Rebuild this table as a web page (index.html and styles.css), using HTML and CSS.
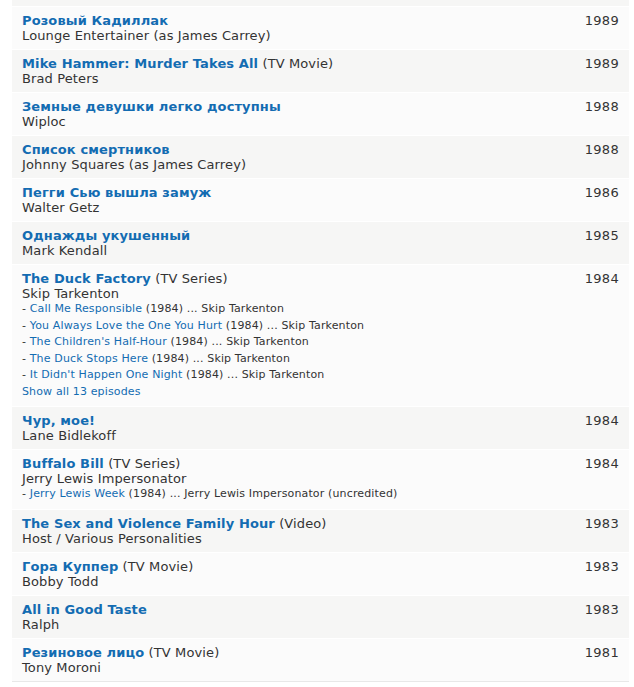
FILE: index.html
```html
<!DOCTYPE html>
<html lang="ru">
<head>
<meta charset="utf-8">
<title>Filmography</title>
<link rel="stylesheet" href="styles.css">
</head>
<body>
<div class="filmo">
  <div class="row odd tail"></div>
  <div class="row even">
    <span class="year">1989</span>
    <b><a href="#">Розовый Кадиллак</a></b><br>Lounge Entertainer (as James Carrey)
  </div>
  <div class="row odd">
    <span class="year">1989</span>
    <b><a href="#">Mike Hammer: Murder Takes All</a></b> (TV Movie)<br>Brad Peters
  </div>
  <div class="row even">
    <span class="year">1988</span>
    <b><a href="#">Земные девушки легко доступны</a></b><br>Wiploc
  </div>
  <div class="row odd">
    <span class="year">1988</span>
    <b><a href="#">Список смертников</a></b><br>Johnny Squares (as James Carrey)
  </div>
  <div class="row even">
    <span class="year">1986</span>
    <b><a href="#">Пегги Сью вышла замуж</a></b><br>Walter Getz
  </div>
  <div class="row odd">
    <span class="year">1985</span>
    <b><a href="#">Однажды укушенный</a></b><br>Mark Kendall
  </div>
  <div class="row even">
    <span class="year">1984</span>
    <b><a href="#">The Duck Factory</a></b> (TV Series)<br>Skip Tarkenton
    <div class="episodes">
      <div class="ep">- <a href="#">Call Me Responsible</a> (1984) ... Skip Tarkenton</div>
      <div class="ep">- <a href="#">You Always Love the One You Hurt</a> (1984) ... Skip Tarkenton</div>
      <div class="ep">- <a href="#">The Children's Half-Hour</a> (1984) ... Skip Tarkenton</div>
      <div class="ep">- <a href="#">The Duck Stops Here</a> (1984) ... Skip Tarkenton</div>
      <div class="ep">- <a href="#">It Didn't Happen One Night</a> (1984) ... Skip Tarkenton</div>
      <div class="ep"><a href="#">Show all 13 episodes</a></div>
    </div>
  </div>
  <div class="row odd">
    <span class="year">1984</span>
    <b><a href="#">Чур, мое!</a></b><br>Lane Bidlekoff
  </div>
  <div class="row even">
    <span class="year">1984</span>
    <b><a href="#">Buffalo Bill</a></b> (TV Series)<br>Jerry Lewis Impersonator
    <div class="episodes">
      <div class="ep">- <a href="#">Jerry Lewis Week</a> (1984) ... Jerry Lewis Impersonator (uncredited)</div>
    </div>
  </div>
  <div class="row odd">
    <span class="year">1983</span>
    <b><a href="#">The Sex and Violence Family Hour</a></b> (Video)<br>Host / Various Personalities
  </div>
  <div class="row even">
    <span class="year">1983</span>
    <b><a href="#">Гора Куппер</a></b> (TV Movie)<br>Bobby Todd
  </div>
  <div class="row odd">
    <span class="year">1983</span>
    <b><a href="#">All in Good Taste</a></b><br>Ralph
  </div>
  <div class="row even last">
    <span class="year">1981</span>
    <b><a href="#">Резиновое лицо</a></b> (TV Movie)<br>Tony Moroni
  </div>
</div>
</body>
</html>
```
FILE: styles.css
```css
html, body {
  margin: 0;
  padding: 0;
  background: #fff;
}
body {
  font-family: "DejaVu Sans", Verdana, sans-serif;
  font-size: 13px;
  color: #333;
  letter-spacing: 0.12px;
}
.filmo {
  margin: 0 0 0 12px;
  width: 617px;
}
.row {
  padding: 6px 10px;
  line-height: 15px;
  border-bottom: 1px solid #fff;
}
.row.tail {
  padding: 0;
  height: 6px;
}
.row.odd { background: #f6f6f5; }
.row.even { background: #fbfbfb; }
.row.last { border-bottom: 1px solid #e8e8e8; }
.year {
  float: right;
  color: #333;
  letter-spacing: 0.3px;
}
a {
  color: #136cb2;
  text-decoration: none;
}
b a { font-weight: bold; }
.episodes {
  font-size: 11px;
  line-height: 16.5px;
  letter-spacing: 0.14px;
}
```
